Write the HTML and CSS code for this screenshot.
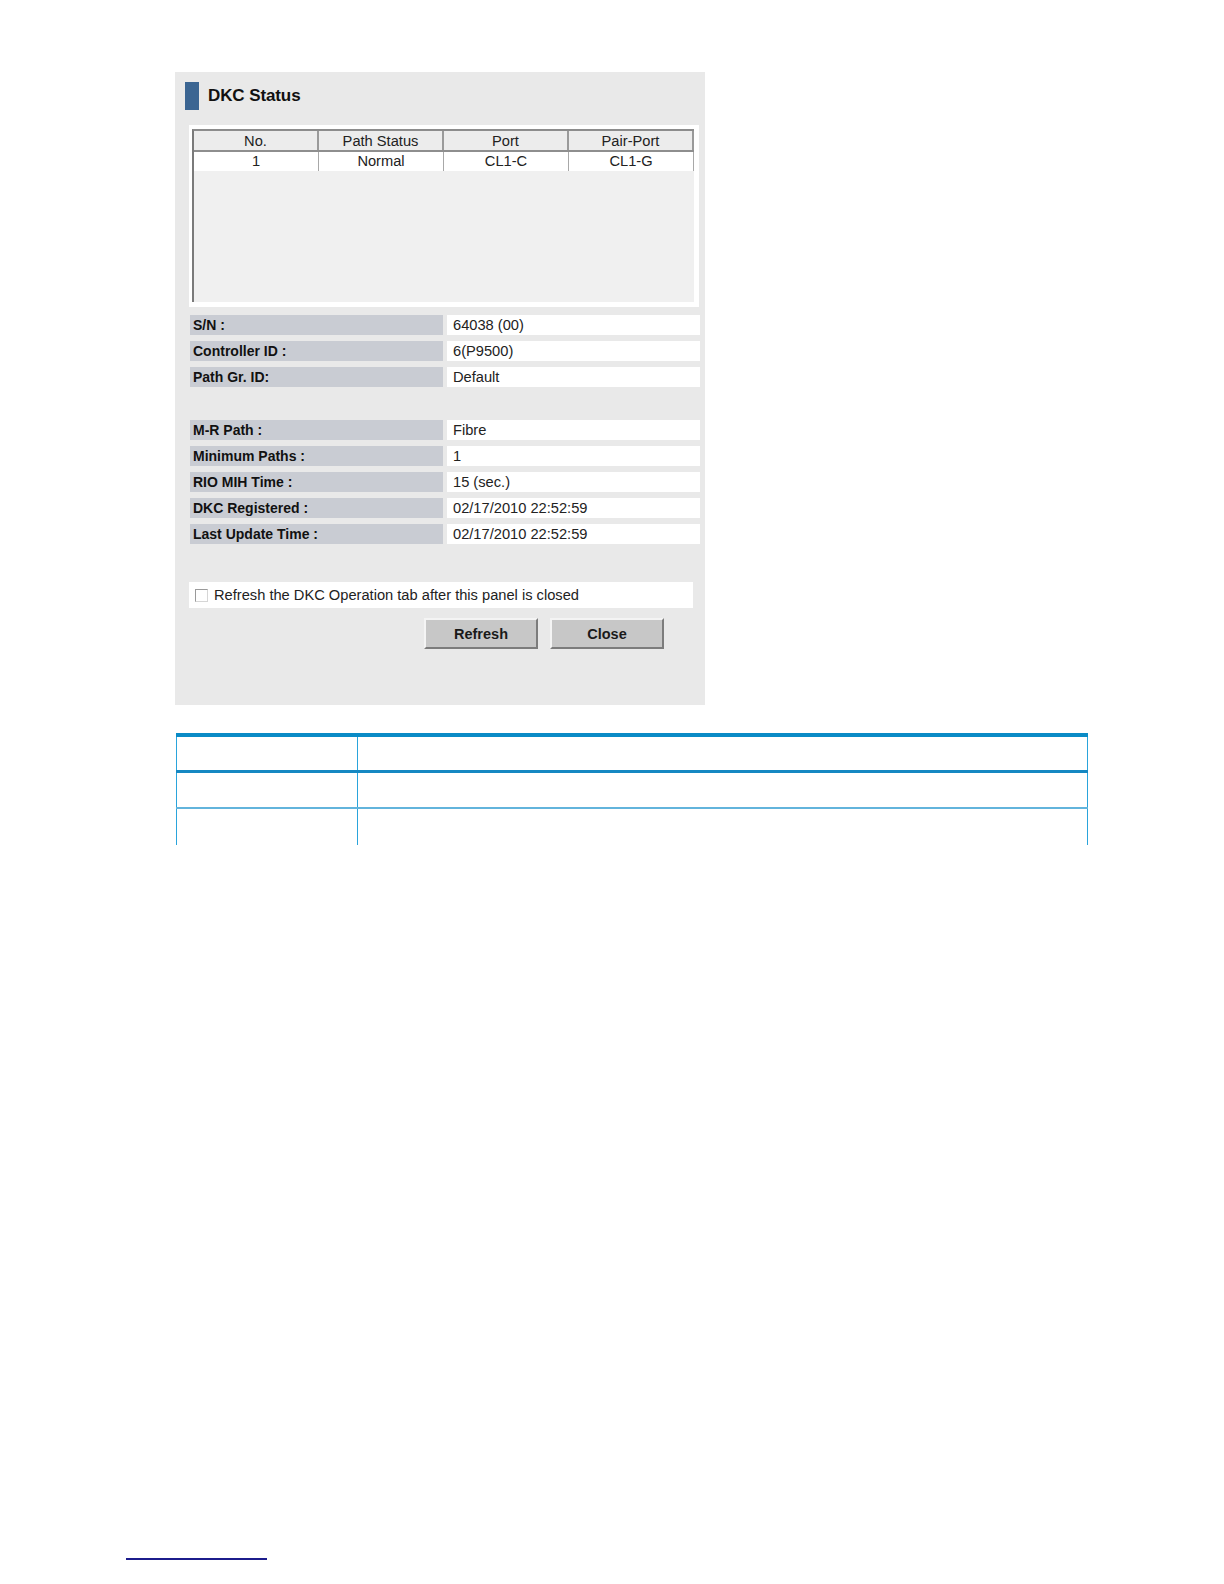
FILE: index.html
```html
<!DOCTYPE html>
<html lang="en">
<head>
<meta charset="utf-8">
<title>DKC Status</title>
<link rel="stylesheet" href="styles.css">
</head>
<body>
<div class="page">
  <div class="panel">
    <div class="title">
      <span class="accent"></span>
      <h1>DKC Status</h1>
    </div>
    <div class="grid-frame">
      <div class="grid">
        <div class="grid-head">
          <div class="hcell">No.</div>
          <div class="hcell">Path Status</div>
          <div class="hcell">Port</div>
          <div class="hcell">Pair-Port</div>
        </div>
        <div class="grid-row">
          <div class="cell">1</div>
          <div class="cell">Normal</div>
          <div class="cell">CL1-C</div>
          <div class="cell">CL1-G</div>
        </div>
      </div>
    </div>
    <div class="info">
      <div class="row"><div class="label">S/N :</div><div class="value">64038 (00)</div></div>
      <div class="row"><div class="label">Controller ID :</div><div class="value">6(P9500)</div></div>
      <div class="row"><div class="label">Path Gr. ID:</div><div class="value">Default</div></div>
    </div>
    <div class="info info-second">
      <div class="row"><div class="label">M-R Path :</div><div class="value">Fibre</div></div>
      <div class="row"><div class="label">Minimum Paths :</div><div class="value">1</div></div>
      <div class="row"><div class="label">RIO MIH Time :</div><div class="value">15 (sec.)</div></div>
      <div class="row"><div class="label">DKC Registered :</div><div class="value">02/17/2010 22:52:59</div></div>
      <div class="row"><div class="label">Last Update Time :</div><div class="value">02/17/2010 22:52:59</div></div>
    </div>
    <div class="check-bar">
      <span class="checkbox"></span>
      <span class="check-label">Refresh the DKC Operation tab after this panel is closed</span>
    </div>
    <div class="buttons">
      <button class="btn">Refresh</button>
      <button class="btn">Close</button>
    </div>
  </div>
  <div class="doc-table">
    <div class="doc-row doc-head"><div class="c1"></div><div class="c2"></div></div>
    <div class="doc-row doc-r1"><div class="c1"></div><div class="c2"></div></div>
    <div class="doc-row doc-r2"><div class="c1"></div><div class="c2"></div></div>
  </div>
  <div class="footer-line"></div>
</div>
</body>
</html>
```
FILE: styles.css
```css
* { box-sizing: border-box; }
html, body { margin: 0; padding: 0; background: #ffffff; }
body { font-family: "Liberation Sans", Arial, sans-serif; color: #111; }

.page { padding: 72px 0 0 175px; width: 1224px; }

.panel {
  width: 530px;
  height: 633px;
  background: #e9e9e9;
  padding-top: 10px;
  display: flex;
  flex-direction: column;
}

.title { display: flex; align-items: center; height: 28px; }
.accent { width: 14px; height: 28px; background: #3b6592; margin-left: 10px; }
.title h1 {
  margin: 0 0 0 9px;
  font-size: 17px;
  font-weight: bold;
  color: #111;
  letter-spacing: -0.1px;
}

.grid-frame {
  margin: 15px 0 0 14px;
  width: 510px;
  height: 182px;
  background: #ffffff;
  padding: 4px 5px 5px 3px;
}
.grid {
  height: 100%;
  background: #f0f0f0;
  border-top: 2px solid #8c8c8c;
  border-left: 2px solid #7a7a7a;
}
.grid-head { display: flex; height: 21px; background: #ececec; border-bottom: 2px solid #8e8e8e; }
.hcell {
  width: 125px;
  border-right: 2px solid #9a9a9a;
  text-align: center;
  font-size: 11pt;
  line-height: 20px;
  color: #222;
}
.grid-row { display: flex; height: 19px; background: #ffffff; }
.cell {
  width: 125px;
  border-right: 1px solid #a8a8a8;
  text-align: center;
  font-size: 11pt;
  line-height: 18px;
  color: #222;
}

.info { display: flex; flex-direction: column; gap: 6px; margin: 8px 0 0 15px; }
.info-second { margin-top: 33px; }
.row { display: flex; gap: 4px; height: 20px; }
.label {
  width: 253px;
  background: #c9ccd3;
  font-weight: bold;
  font-size: 14px;
  line-height: 20px;
  padding-left: 3px;
  color: #111;
}
.value {
  width: 253px;
  background: #ffffff;
  font-size: 11pt;
  line-height: 20px;
  padding-left: 6px;
  color: #222;
}

.check-bar {
  margin: 38px 0 0 14px;
  width: 504px;
  height: 26px;
  background: #ffffff;
  display: flex;
  align-items: center;
  padding-left: 6px;
}
.checkbox {
  width: 13px;
  height: 13px;
  border: 1px solid #9a9a9a;
  border-right-color: #d6d6d6;
  border-bottom-color: #d6d6d6;
  background: #fff;
  margin-right: 6px;
}
.check-label { font-size: 11pt; color: #222; }

.buttons { display: flex; gap: 12px; margin-top: 10px; padding-left: 249px; }
.btn {
  width: 114px;
  height: 31px;
  background: #c7c7c7;
  border: 2px solid;
  border-color: #f4f4f4 #7c7c7c #7c7c7c #f4f4f4;
  font-family: "Liberation Sans", Arial, sans-serif;
  font-weight: bold;
  font-size: 14.5px;
  color: #1a1a1a;
  padding: 0;
}

.doc-table {
  margin: 28px 0 0 1px;
  width: 912px;
  border-top: 4px solid #0a8bc6;
}
.doc-row { display: flex; }
.doc-row .c1 { width: 182px; border-left: 1px solid #2aa4dc; border-right: 1px solid #2aa4dc; }
.doc-row .c2 { flex: 1; border-right: 1px solid #2aa4dc; }
.doc-head { height: 36px; border-bottom: 3px solid #1688c2; }
.doc-r1 { height: 36px; border-bottom: 2px solid #62b4dc; }
.doc-r2 { height: 36px; }

.footer-line {
  margin: 713px 0 0 -49px;
  width: 141px;
  height: 2px;
  background: #1c1c8c;
}
```
